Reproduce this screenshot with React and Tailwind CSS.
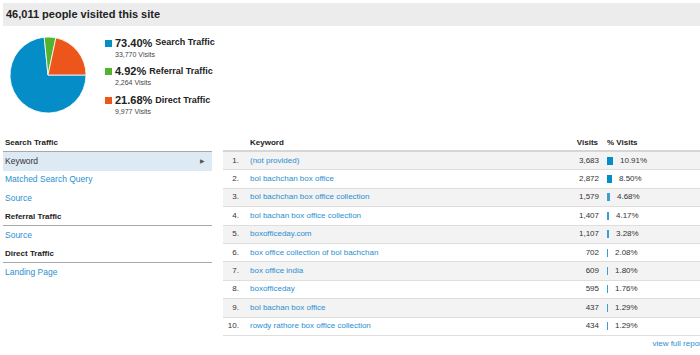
const slices = [
  { pct: '73.40%', label: 'Search Traffic', visits: '33,770 Visits', color: 'bg-[#058dc7]' },
  { pct: '4.92%', label: 'Referral Traffic', visits: '2,264 Visits', color: 'bg-[#50b432]' },
  { pct: '21.68%', label: 'Direct Traffic', visits: '9,977 Visits', color: 'bg-[#ed561b]' },
]

const keywords = [
  ['(not provided)', '3,683', 10.91],
  ['bol bachchan box office', '2,872', 8.5],
  ['bol bachchan box office collection', '1,579', 4.68],
  ['bol bachan box office collection', '1,407', 4.17],
  ['boxofficeday.com', '1,107', 3.28],
  ['box office collection of bol bachchan', '702', 2.08],
  ['box office india', '609', 1.8],
  ['boxofficeday', '595', 1.76],
  ['bol bachan box office', '437', 1.29],
  ['rowdy rathore box office collection', '434', 1.29],
]

const nav = [
  { title: 'Search Traffic', items: ['Keyword', 'Matched Search Query', 'Source'] },
  { title: 'Referral Traffic', items: ['Source'] },
  { title: 'Direct Traffic', items: ['Landing Page'] },
]

function Pie() {
  return (
    <svg width="100" height="90" viewBox="0 0 100 90" className="mt-[4px] shrink-0">
      <g stroke="#ffffff" strokeWidth="0.8" strokeLinejoin="round">
        <path d="M48 45 L86 45 A38 38 0 1 1 44.19 7.19 Z" fill="#058dc7" />
        <path d="M48 45 L44.19 7.19 A38 38 0 0 1 55.87 7.82 Z" fill="#50b432" />
        <path d="M48 45 L55.87 7.82 A38 38 0 0 1 86 45 Z" fill="#ed561b" />
      </g>
    </svg>
  )
}

export default function App() {
  return (
    <div className="w-[700px] h-[355px] overflow-hidden bg-white text-[#333] font-['Liberation_Sans',Arial,sans-serif]">
      {/* Title bar */}
      <div className="ml-[3px] mt-[3px] h-[23px] w-[710px] bg-[#ececec] flex items-center pl-[3px] text-[11px] font-bold text-[#222]">
        46,011 people visited this site
      </div>

      {/* Pie + legend */}
      <div className="flex h-[107.5px]">
        <Pie />
        <div className="ml-[5px] pt-[10.5px] flex flex-col gap-[6.7px]">
          {slices.map((s) => (
            <div key={s.label}>
              <div className="flex items-center h-[13px] whitespace-nowrap">
                <span className={`w-[7px] h-[7px] mr-[3px] ${s.color}`} />
                <span className="text-[11px] font-bold text-[#222]">{s.pct}</span>
                <span className="text-[9px] font-bold text-[#222] ml-[3px]">{s.label}</span>
              </div>
              <div className="pl-[10px] text-[7px] leading-[9px] text-[#444]">{s.visits}</div>
            </div>
          ))}
        </div>
      </div>

      {/* Nav + table */}
      <div className="flex">
        <div className="ml-[3px] w-[209px] shrink-0">
          {nav.map((sec) => (
            <div key={sec.title}>
              <div className="h-[18.5px] flex items-end pb-[2px] pl-[2px] border-b border-[#a8a8a8] text-[8px] font-bold text-[#222]">
                {sec.title}
              </div>
              {sec.items.map((item) =>
                item === 'Keyword' ? (
                  <div key={item} className="h-[18.5px] flex items-center justify-between pl-[2px] pr-[7px] bg-[#dde9f3] text-[8.5px] text-[#333]">
                    <span>{item}</span>
                    <span className="text-[6px] text-[#555]">▶</span>
                  </div>
                ) : (
                  <div key={item} className="h-[18.5px] flex items-center pl-[2px] text-[8.5px] text-[#2a8fcf]">
                    {item}
                  </div>
                )
              )}
            </div>
          ))}
        </div>

        <div className="ml-[11px] w-[482px] shrink-0">
          <div className="h-[18.5px] flex items-center pt-[2px] border-b-2 border-[#d6d6d6] text-[8px] font-bold text-[#222]">
            <span className="w-[16px]" />
            <span className="flex-1 pl-[11px]">Keyword</span>
            <span className="pr-[1px]">Visits</span>
            <span className="w-[106px] pl-[8px]">% Visits</span>
          </div>
          {keywords.map(([kw, visits, pct], i) => (
            <div
              key={kw}
              className={`h-[18.4px] flex items-center border-b border-[#dedede] text-[8px] ${i % 2 === 0 ? 'bg-[#f3f3f3]' : 'bg-white'}`}
            >
              <span className="w-[16px] text-right text-[#333]">{i + 1}.</span>
              <span className="flex-1 pl-[11px] text-[#2a8fcf]">{kw}</span>
              <span className="text-right text-[#333]">{visits}</span>
              <span className="w-[106px] pl-[8px] flex items-center">
                <span
                  className={`h-[8px] ${pct > 5 ? 'bg-[#058dc7]' : 'bg-[#3a9fd2]'}`}
                  style={{ width: `${Math.max(1, Math.round(pct * 0.55))}px` }}
                />
                <span className="ml-[7px] text-[#333]">{pct.toFixed(2)}%</span>
              </span>
            </div>
          ))}
          <div className="mt-[3px] text-right pr-[1px] text-[8px] leading-[10px] text-[#2a8fcf]">view full report</div>
        </div>
      </div>
    </div>
  )
}
